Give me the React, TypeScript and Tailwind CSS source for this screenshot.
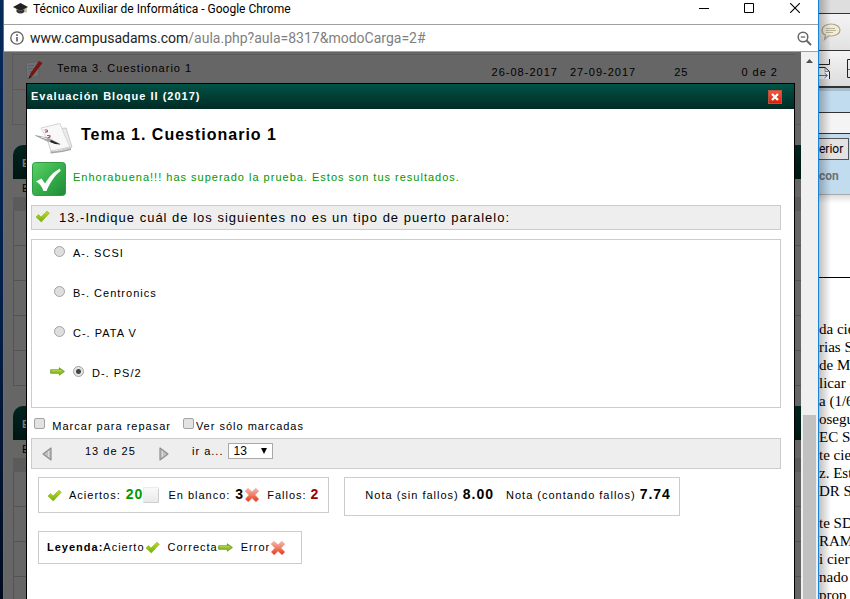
import type { ReactNode } from "react";

function Tick({ size = 15 }: { size?: number }) {
  return (
    <svg width={size} height={size} viewBox="0 0 15 15" className="shrink-0" aria-hidden="true">
      <defs>
        <linearGradient id="tick" x1="0" y1="0" x2="0" y2="1">
          <stop offset="0" stopColor="#c3dc1c" />
          <stop offset="1" stopColor="#6fae12" />
        </linearGradient>
      </defs>
      <path d="M1 8 L3.5 5.5 L6 8 L12 2.2 L14.3 4.2 L6.3 13 Z" fill="url(#tick)" stroke="#8fba2c" strokeWidth=".7" strokeLinejoin="round" />
    </svg>
  );
}

function Cross() {
  return (
    <svg width="16" height="16" viewBox="0 0 16 16" className="shrink-0" aria-hidden="true">
      <defs>
        <linearGradient id="cross" x1="0" y1="0" x2="0" y2="1">
          <stop offset="0" stopColor="#f8b7a6" />
          <stop offset=".5" stopColor="#ee7d68" />
          <stop offset="1" stopColor="#e8300f" />
        </linearGradient>
      </defs>
      <path d="M1 4 L4 1.3 L8 4.8 L11.8 1.3 L14.8 4 L11.2 8 L15 12 L12 15 L8 11.3 L4.2 15 L1.2 12 L4.8 8 Z" fill="url(#cross)" stroke="#efa492" strokeWidth=".6" strokeLinejoin="round" />
    </svg>
  );
}

function Arrow() {
  return (
    <svg width="15" height="9" viewBox="0 0 15 9" className="shrink-0" aria-hidden="true">
      <path d="M.7 2.8 H9.3 V.8 L14.4 4.5 L9.3 8.2 V6.2 H.7 Z" fill="#94c11f" stroke="#6c9a2e" strokeWidth=".9" strokeLinejoin="round" />
      <path d="M1.5 3.7 H11" stroke="#c0dd55" strokeWidth=".8" />
    </svg>
  );
}

function Blank() {
  return (
    <svg width="16" height="16" viewBox="0 0 16 16" className="shrink-0" aria-hidden="true">
      <defs>
        <linearGradient id="blank" x1="0" y1="0" x2="0" y2="1">
          <stop offset="0" stopColor="#fafafa" />
          <stop offset="1" stopColor="#e9e9e9" />
        </linearGradient>
      </defs>
      <rect x=".5" y=".5" width="15" height="15" fill="url(#blank)" stroke="#ececec" />
      <path d="M.5 15.5 H15.5 V2" fill="none" stroke="#cfcfcf" />
    </svg>
  );
}

function Papers() {
  return (
    <svg width="38" height="34" viewBox="0 0 38 34" className="shrink-0" aria-hidden="true">
      <path d="M10 8 L31 6 L37 25 L17 31 Z" fill="#ececec" stroke="#bdbdbd" strokeWidth=".8" />
      <path d="M6 6 Q14 4 25 1.5 Q29 12 35 25 L16 29 Q13 16 6 6 Z" fill="#f8f8f8" stroke="#cfcfcf" strokeWidth=".9" />
      <path d="M15 29.5 Q25 30 36 26 L36 28 Q26 31 16 31.5 Z" fill="#a8a8a8" />
      <g fill="none" stroke="#c45560" strokeWidth="1">
        <path d="M9.5 8 h3 v2 h-2 M10 10.5 l3-2" />
        <path d="M12 13.5 h3 v2 h-2 M12.5 16 l3-2" />
      </g>
      <path d="M.5 13.5 L13 16 L25 22 L12 19 Z" fill="#a5a5a5" stroke="#888" strokeWidth=".5" />
      <path d="M16 18 L25.5 22.5 L20 22 L15 20 Z" fill="#222" />
      <path d="M6 15 L12 16.8" stroke="#e8e8e8" />
    </svg>
  );
}

function Passed() {
  return (
    <svg width="34" height="34" viewBox="0 0 34 34" className="shrink-0" aria-hidden="true">
      <defs>
        <linearGradient id="passed" x1="0" y1="0" x2="1" y2="1">
          <stop offset="0" stopColor="#5fd068" />
          <stop offset=".5" stopColor="#36b04a" />
          <stop offset="1" stopColor="#1d8a36" />
        </linearGradient>
      </defs>
      <rect x=".5" y=".5" width="33" height="33" rx="3" fill="url(#passed)" stroke="#2d9c42" />
      <path d="M4 19.5 L9.5 16.5 L13 21.5 C17 15 21 10 28 6.5 L28.5 9 C22 14 18 21 14.5 29 H11.5 C10 25 8 21.5 4 19.5 Z" fill="#fff" />
    </svg>
  );
}

function Notepad() {
  return (
    <svg width="18" height="20" viewBox="0 0 18 20" className="shrink-0" aria-hidden="true">
      <path d="M1 3 L13 1.5 L14 16 L2 18.5 Z" fill="#6d7378" stroke="#5a5d60" strokeWidth=".8" />
      <path d="M3 6 l6-.7 M3 9 l5-.6 M3.5 12 l4-.5" stroke="#54575a" strokeWidth=".8" />
      <path d="M14 1 L17.500 3 L7.500 16 L4 18.500 L5 14 Z" fill="#7a1512" />
      <path d="M4.600 15.500 L3.300 19 L6.500 17 Z" fill="#2d1a12" />
    </svg>
  );
}

function PageTriangle({ next }: { next?: boolean }) {
  return (
    <svg width="10" height="14" viewBox="0 0 10 14" aria-hidden="true">
      <path d={next ? "M1 1 V13 L9 7 Z" : "M9 1 V13 L1 7 Z"} fill="#bfbfbf" stroke="#8f8f8f" strokeWidth="1.2" strokeLinejoin="round" />
      <path d={next ? "M3.5 4 V10" : "M6.5 4 V10"} stroke="#dcdcdc" />
    </svg>
  );
}

function Option({ text, correct, checked }: { text: string; correct?: boolean; checked?: boolean }) {
  return (
    <label className="flex h-10 items-center">
      <span className={correct ? "mr-2 -ml-1 mb-1 flex" : "hidden"}>
        <Arrow />
      </span>
      <input
        type="radio"
        name="respuesta"
        defaultChecked={checked}
        className="mr-2 mb-1 size-[11px] shrink-0 appearance-none rounded-full border border-[#a3a3a3] bg-[#dedede] checked:bg-[radial-gradient(circle,#444_0_2px,#e4e4e4_3px)]"
      />
      <span>{text}</span>
    </label>
  );
}

function Mark({ children, width }: { children: ReactNode; width: string }) {
  return (
    <label className={`flex items-start ${width}`}>
      <input type="checkbox" className="size-[11px] shrink-0 appearance-none rounded-[2px] border border-[#a3a3a3] bg-[#e2e2e2]" />
      <span className="ml-auto leading-4">{children}</span>
    </label>
  );
}

function Section({ rows }: { rows: number }) {
  return (
    <section className="ml-[9px] text-[11px]">
      <h2 className="h-[34px] rounded-tl-[10px] bg-linear-to-b from-[#00241f] to-[#001612] pt-[10px] pl-[9px] font-bold text-[#777]">E</h2>
      <p className="h-[18px] pl-[9px] leading-[18px]">E</p>
      <div className="h-[14px] bg-[#5b5b5b]" />
      {Array.from({ length: rows }, (_, i) => (
        <div key={i} className="flex h-[35px] items-center border-b border-l border-[#545454] pl-3">
          <span className="h-4 w-px bg-[#555]" />
        </div>
      ))}
    </section>
  );
}

function TitleBar() {
  return (
    <header className="flex h-[25px] shrink-0 items-start border-b border-[#a0a0a0] bg-white pl-[9px]">
      <svg width="15" height="11" viewBox="0 0 15 11" className="mt-[3px] shrink-0" aria-hidden="true">
        <path d="M7.5 0 L15 4 L7.5 8 L0 4 Z" fill="#222" />
        <path d="M3.5 6 V9 Q7.5 12 11.5 9 V6 L7.5 8 Z" fill="#333" />
        <path d="M13 5 V9.5" stroke="#a58b3a" />
      </svg>
      <h1 className="ml-[5px] font-['Roboto',sans-serif] text-[12px] leading-[18px] whitespace-nowrap">
        Técnico Auxiliar de Informática - Google Chrome
      </h1>
      <div className="ml-auto flex">
        <button aria-label="Minimizar" className="flex h-4 w-[45px] items-center justify-center">
          <svg width="10" height="10"><path d="M0 5.500 H10" stroke="#000" /></svg>
        </button>
        <button aria-label="Maximizar" className="flex h-4 w-[46px] items-center justify-center">
          <svg width="10" height="10"><path d="M.5 .5 H9.500 V9.500 H.5 Z" fill="none" stroke="#000" /></svg>
        </button>
        <button aria-label="Cerrar" className="flex h-4 w-[46px] items-center justify-center">
          <svg width="10" height="10"><path d="M0 0 L10 10 M10 0 L0 10" stroke="#000" strokeWidth="1.100" /></svg>
        </button>
      </div>
    </header>
  );
}

function AddressBar() {
  return (
    <div className="flex h-[27px] shrink-0 items-center border-b border-[#a0a0a0] bg-white px-[6px]">
      <svg width="14" height="14" viewBox="0 0 14 14" className="shrink-0" aria-hidden="true">
        <circle cx="7" cy="7" r="6.2" fill="none" stroke="#5a5a5a" strokeWidth="1.3" />
        <path d="M7 6 V10.5 M7 3.3 V4.9" stroke="#5a5a5a" strokeWidth="1.6" />
      </svg>
      <p className="ml-[6px] font-['Roboto',sans-serif] text-[14px] leading-5 whitespace-nowrap text-[#808080]">
        <span className="text-[#222]">www.campusadams.com</span>/aula.php?aula=8317&amp;modoCarga=2#
      </p>
      <button aria-label="Zoom" className="ml-auto">
        <svg width="15" height="15" viewBox="0 0 15 15" fill="none" stroke="#666">
          <circle cx="6" cy="6" r="4.8" strokeWidth="1.5" />
          <path d="M3.8 6 H8.2" strokeWidth="1.3" />
          <path d="M9.5 9.5 L14 14" strokeWidth="1.9" />
        </svg>
      </button>
    </div>
  );
}

function Dialog() {
  return (
    <div role="dialog" aria-label="Evaluación Bloque II (2017)" className="absolute top-[31px] right-[6px] bottom-0 left-[22px] overflow-hidden border-x border-t border-black bg-white">
      <div className="flex h-[25px] items-center justify-between bg-linear-to-b from-[#005347] to-[#002b25] pr-3 pl-1">
        <h2 className="font-bold text-white">Evaluación Bloque II (2017)</h2>
        <button aria-label="Cerrar evaluación" className="flex size-[14px] items-center justify-center border border-[#b8563d] bg-linear-to-b from-[#f4573b] to-[#d91a08]">
          <svg width="8" height="8" viewBox="0 0 8 8"><path d="M1 1 L7 7 M7 1 L1 7" stroke="#fff" strokeWidth="2.2" /></svg>
        </button>
      </div>
      <div className="pr-[13px] pl-1">
        <div className="flex items-center pt-2 pl-1">
          <span className="flex h-11 items-center"><Papers /></span>
          <h3 className="mb-2 ml-2 text-[16px] font-bold">Tema 1. Cuestionario 1</h3>
        </div>
        <div className="mt-px flex items-center text-[#009900]">
          <span className="ml-px"><Passed /></span>
          <p className="mb-1 ml-[7px]">Enhorabuena!!! has superado la prueba. Estos son tus resultados.</p>
        </div>
        <div className="mt-[9px] flex h-[25px] items-center border border-[#ccc] bg-[#eee] pl-[3px] text-[13px]">
          <span className="mb-0.5"><Tick /></span>
          <p className="ml-[9px]">13.-Indique cuál de los siguientes no es un tipo de puerto paralelo:</p>
        </div>
        <fieldset className="mt-[9px] h-[169px] border border-[#ccc] pl-[22px]">
          <div className="-mt-[7px]">
            <Option text="A-. SCSI" />
            <Option text="B-. Centronics" />
            <Option text="C-. PATA V" />
            <Option text="D-. PS/2" correct checked />
          </div>
        </fieldset>
        <div className="flex h-[30px] pt-[10px] pl-[3px]">
          <Mark width="w-[137px]">Marcar para repasar</Mark>
          <span className="w-3" />
          <Mark width="w-[121px]">Ver sólo marcadas</Mark>
        </div>
        <div className="flex h-[31px] items-center border border-[#ccc] bg-[#eee] pl-[10px]">
          <button aria-label="Anterior"><PageTriangle /></button>
          <span className="mb-1 ml-[33px] w-[51px] whitespace-nowrap">13 de 25</span>
          <button aria-label="Siguiente" className="ml-[23px]"><PageTriangle next /></button>
          <label htmlFor="pregunta" className="mb-1 ml-[23px]">ir a...</label>
          <span className="mb-[6px] ml-[5px] grid items-center">
            <select id="pregunta" defaultValue="13" className="col-start-1 row-start-1 h-4 w-[45px] appearance-none border border-[#a9a9a9] bg-white pl-1 text-[12px] leading-[14px] tracking-normal">
              <option>12</option>
              <option>13</option>
              <option>14</option>
            </select>
            <svg width="6" height="6" className="pointer-events-none col-start-1 row-start-1 mr-[6px] justify-self-end"><path d="M0 0 H6 L3 6 Z" /></svg>
          </span>
        </div>
        <div className="mt-2 flex items-start gap-[15px] pl-[7px] whitespace-nowrap">
          <div className="flex h-[36px] items-center border border-[#ccc] pr-[9px] pl-2">
            <Tick />
            <span className="ml-[7px]">Aciertos:</span>
            <b className="mb-0.5 ml-[5px] text-[14px] text-[#009900]">20</b>
            <Blank />
            <span className="ml-[9px]">En blanco:</span>
            <b className="mb-0.5 ml-[5px] text-[14px]">3</b>
            <Cross />
            <span className="ml-[7px]">Fallos:</span>
            <b className="mb-0.5 ml-1 text-[14px] text-[#990000]">2</b>
          </div>
          <div className="flex h-[39px] items-center border border-[#ccc] pr-2 pb-[3px] pl-5">
            <span>Nota (sin fallos)</span>
            <b className="mb-0.5 ml-1 text-[14px]">8.00</b>
            <span className="ml-3">Nota (contando fallos)</span>
            <b className="mb-0.5 ml-1 text-[14px]">7.74</b>
          </div>
        </div>
        <div className="mt-[15px] ml-[7px] flex h-[33px] w-fit items-center border border-[#ccc] pr-[15px] pl-2 whitespace-nowrap">
          <b>Leyenda:</b>
          <span>Acierto</span>
          <Tick />
          <span className="ml-2">Correcta</span>
          <Arrow />
          <span className="ml-2">Error</span>
          <Cross />
        </div>
      </div>
    </div>
  );
}

function Browser() {
  return (
    <main className="flex min-w-0 flex-1 flex-col border-x border-[#1883d7]">
      <TitleBar />
      <AddressBar />
      <div className="flex min-h-0 flex-1">
        <div className="relative min-w-0 flex-1 overflow-hidden bg-[#666] font-['Liberation_Sans',Arial,sans-serif] text-[11px] tracking-[1px]">
          <div className="mt-0.5 mr-[6px] ml-2 flex h-[36px] items-start border-y border-l border-[#5a5a5a] whitespace-nowrap">
            <span className="mt-[5px] ml-3"><Notepad /></span>
            <span className="mt-[5px] ml-[14px]">Tema 3. Cuestionario 1</span>
            <span className="mt-[9px] ml-auto">26-08-2017</span>
            <span className="mt-[9px] ml-3">27-09-2017</span>
            <span className="mt-[9px] ml-[38px]">25</span>
            <span className="mt-[9px] mr-[17px] ml-[53px]">0 de 2</span>
          </div>
          <div className="ml-2 h-[35px] border-b border-l border-[#5a5a5a]" />
          <div className="h-5" />
          <Section rows={5} />
          <div className="h-5" />
          <Section rows={4} />
          <Dialog />
        </div>
        <div className="flex w-[17px] shrink-0 flex-col items-center bg-[#f0f0f0]">
          <svg width="7" height="4" className="mt-[7px] shrink-0"><path d="M0 4 L3.5 0 L7 4 Z" fill="#505050" /></svg>
          <div className="mt-[352px] w-[13px] flex-1 bg-[#c1c1c1]" />
        </div>
      </div>
    </main>
  );
}

const firstLines = ["da cie", "rias S", "de M", "licar e", "a (1/6", "osegu", "EC SI", "te cie", "z. Est", "DR ST"];
const lastLines = ["te SD", "RAM", "i ciert", "nado", "prop"];

function Reader() {
  return (
    <aside className="relative flex w-[31px] shrink-0 flex-col overflow-hidden bg-white">
      <div className="h-[14px] shrink-0 border-b border-[#333] bg-[#dedede]" />
      <div className="h-[37px] shrink-0 border-b border-[#333] bg-linear-to-b from-[#f4f4f4] to-[#e2e2e2] pt-[9px] pl-[2px]">
        <svg width="20" height="18" viewBox="0 0 20 18" aria-hidden="true">
          <path d="M10 1 C15 1 19 3.500 19 7 C19 10.500 15 13 10 13 L7.500 12.800 L3.500 16.500 L4.500 12 C2 11 1 9 1 7 C1 3.500 5 1 10 1 Z" fill="#f5edcc" stroke="#a9a59b" strokeWidth="1.2" />
          <path d="M5 5.500 H14 M5 7.500 H15 M5 9.500 H12" stroke="#b9b2a0" />
        </svg>
      </div>
      <div className="h-[37px] shrink-0 border-b-2 border-[#333] bg-linear-to-b from-[#f4f4f4] to-[#dcdcdc] pt-[8px]">
        <svg width="31" height="22" viewBox="0 0 31 22" fill="none" aria-hidden="true">
          <path d="M0 9 H6 L10.500 13 V20 H0 Z" fill="#fafafa" />
          <path d="M10.500 0 V5.500 H0 M0 8.500 H6 L10.500 12.500 V20" stroke="#222" />
          <path d="M6 9 V12.500 H10" stroke="#888" />
          <path d="M31 .5 H28.500 V18.500 H31" stroke="#222" />
          <path d="M0 16.500 H8 M5.500 14 L8.500 16.500 L5.500 19 M31 10.500 H29" stroke="#5267a8" />
        </svg>
      </div>
      <div className="h-[25px] shrink-0 border-t-[3px] border-b border-t-[#a8bccb] border-b-[#333] bg-[#c1dcef]" />
      <div className="h-[21px] shrink-0 border-b border-[#333] bg-[#f4f4f4]" />
      <div className="h-[61px] shrink-0 border-b border-[#aaa] bg-[#c1dcef] pt-1 font-['Roboto',sans-serif] text-[12px]">
        <button className="flex h-[22px] w-[30px] items-center border border-l-0 border-[#555] bg-[#e3e3e3] pb-px">erior</button>
        <p className="mt-[7px] font-bold text-[#6c7478]">con</p>
      </div>
      <div className="h-[83px] shrink-0 border-b border-black bg-linear-to-b from-[#ddd] to-white to-10%" />
      <div className="mt-[42px] font-['Liberation_Serif',serif] text-[15px] leading-[18px] whitespace-nowrap">
        {firstLines.map((line) => <p key={line}>{line}</p>)}
        <div className="h-[14px]" />
        {lastLines.map((line) => <p key={line}>{line}</p>)}
      </div>
      <div className="pointer-events-none absolute inset-y-0 left-0 w-3 bg-linear-to-r from-black/25 to-transparent" />
    </aside>
  );
}

export default function App() {
  return (
    <div className="flex h-screen overflow-hidden text-black">
      <div className="w-[3px] shrink-0 bg-linear-to-b from-[#052a5a] via-[#04204a] to-[#020c20]" />
      <Browser />
      <Reader />
    </div>
  );
}
